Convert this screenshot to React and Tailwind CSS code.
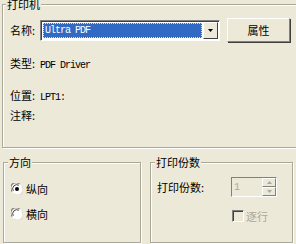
import React from "react";

const cjk = { fontFamily: '"Noto Sans CJK SC", "Noto Sans", sans-serif' };
const mono = { fontFamily: '"Liberation Mono", "DejaVu Sans Mono", monospace' };

function Radio({ checked }) {
  return (
    <svg width="12" height="12" viewBox="0 0 12 12">
      <circle cx="6" cy="6" r="5.5" fill="#ffffff" />
      <path d="M1.2 8.5 A5 5 0 0 1 8.5 1.2" fill="none" stroke="#808080" strokeWidth="1.2" />
      <path d="M2.3 7.8 A4 4 0 0 1 7.8 2.3" fill="none" stroke="#404040" strokeWidth="1" />
      <path d="M10.8 3.5 A5 5 0 0 1 3.5 10.8" fill="none" stroke="#e0ded2" strokeWidth="1.2" />
      {checked && <circle cx="6" cy="6" r="2" fill="#000000" />}
    </svg>
  );
}

function Arrow({ dir, color }) {
  return (
    <svg width="5" height="3" viewBox="0 0 5 3">
      {dir === "up" ? (
        <path d="M0 3 L5 3 L2.5 0 Z" fill={color} />
      ) : (
        <path d="M0 0 L5 0 L2.5 3 Z" fill={color} />
      )}
    </svg>
  );
}

export default function App() {
  return (
    <div
      className="w-[296px] h-[244px] overflow-hidden bg-[#ece9d8] text-[11px] text-black"
      style={cjk}
    >
      {/* ===== printer group ===== */}
      <fieldset className="mx-[2px] -mt-[2px] w-[292px] h-[150px] border border-[#aca899] px-[3px] shadow-[inset_1px_1px_0_#fff,1px_1px_0_#fff]">
        <legend className="px-[1px] leading-[12px] bg-[#ece9d8]">打印机</legend>

        <div className="px-[4px]">
          <div className="mt-[8px] flex items-center h-[24px]">
            <span className="w-[30px]">名称:</span>
            <div className="w-[180px] h-[21px] flex bg-white border-t border-l border-[#808080] border-r border-b border-r-white border-b-white shadow-[inset_1px_1px_0_#404040]">
              <div className="flex-1 flex items-center pl-[2px] pr-[1px] py-[2px]">
                <div className="flex-1 h-full flex items-center bg-[#316ac5] border border-dotted border-[#f0e68c] text-white pl-[1px]">
                  <span className="text-[10px] tracking-[-1px]" style={mono}>Ultra PDF</span>
                </div>
              </div>
              <div className="w-[15px] my-[1px] mr-[1px] flex items-center justify-center bg-[#ece9d8] border-t border-l border-white border-r border-b border-r-[#404040] border-b-[#404040]">
                <Arrow dir="down" color="#000" />
              </div>
            </div>
            <button className="ml-[7px] w-[63px] h-[24px] bg-[#ece9d8] border border-t-white border-l-white border-r-[#808080] border-b-[#808080] shadow-[1px_1px_0_#404040] text-[11px] leading-none">
              属性
            </button>
          </div>

          <div className="mt-[11px] h-[20px] leading-[20px] whitespace-nowrap">
            <span>类型:</span>
            <span className="ml-[5px] text-[10px] tracking-[-1px]" style={mono}>PDF Driver</span>
          </div>
          <div className="mt-[12px] h-[20px] leading-[20px] whitespace-nowrap">
            <span>位置:</span>
            <span className="ml-[5px] text-[10px] tracking-[-1px]" style={mono}>LPT1:</span>
          </div>
          <div className="h-[20px] leading-[20px]">
            <span>注释:</span>
          </div>
        </div>
      </fieldset>

      {/* ===== bottom groups ===== */}
      <div className="mt-[8px] flex">
        <fieldset className="ml-[3px] w-[138px] h-[87px] border border-[#aca899] px-[3px] shadow-[inset_1px_1px_0_#fff,1px_1px_0_#fff]">
          <legend className="ml-[1px] px-[1px] leading-[12px] bg-[#ece9d8]">方向</legend>
          <div className="px-[4px]">
            <div className="mt-[13px] h-[16px] flex items-center gap-[3px]">
              <Radio checked />
              <span>纵向</span>
            </div>
            <div className="mt-[9px] h-[16px] flex items-center gap-[3px]">
              <Radio />
              <span>横向</span>
            </div>
          </div>
        </fieldset>

        <fieldset className="ml-[9px] w-[143px] h-[87px] border border-[#aca899] px-[3px] shadow-[inset_1px_1px_0_#fff,1px_1px_0_#fff]">
          <legend className="ml-[1px] px-[1px] leading-[12px] bg-[#ece9d8]">打印份数</legend>
          <div className="px-[3px]">
            <div className="mt-[9px] h-[20px] flex items-center">
              <span className="w-[74px]">打印份数:</span>
              <div className="w-[46px] h-[20px] flex bg-[#ece9d8] border border-t-[#808080] border-l-[#808080] border-r-white border-b-white">
                <div className="flex-1 flex items-center pl-[2px] text-[#aca899] text-[10px]" style={mono}>
                  1
                </div>
                <div className="w-[14px] flex flex-col">
                  <div className="flex-1 flex items-center justify-center border border-t-white border-l-white border-r-[#808080] border-b-[#808080]">
                    <Arrow dir="up" color="#aca899" />
                  </div>
                  <div className="flex-1 flex items-center justify-center border border-t-white border-l-white border-r-[#808080] border-b-[#808080]">
                    <Arrow dir="down" color="#aca899" />
                  </div>
                </div>
              </div>
            </div>
            <div className="mt-[12px] h-[14px] flex items-center">
              <div className="ml-[75px] w-[12px] h-[12px] bg-[#ece9d8] border border-t-[#808080] border-l-[#808080] border-r-white border-b-white shadow-[inset_1px_1px_0_#404040]" />
              <span className="ml-[2px] text-[#aca899]">逐行</span>
            </div>
          </div>
        </fieldset>
      </div>
    </div>
  );
}
